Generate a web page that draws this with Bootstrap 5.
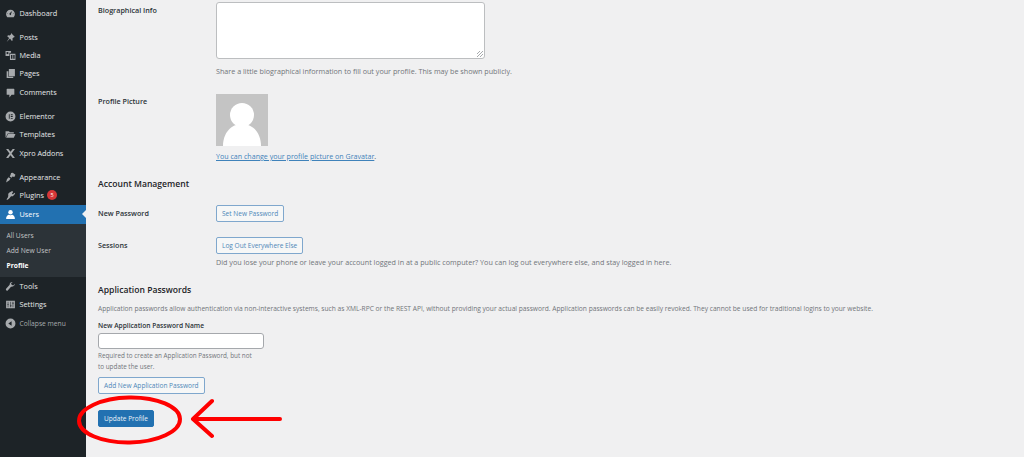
<!DOCTYPE html>
<html lang="en"><head><meta charset="utf-8"><title>Profile</title>
<link href="https://cdn.jsdelivr.net/npm/bootstrap@5.3.0/dist/css/bootstrap.min.css" rel="stylesheet">
<style>
html,body{height:457px;overflow:hidden}
body{background:#f0f0f1;font-family:"Open Sans","Noto Sans",sans-serif;font-size:7.2px;line-height:11px;color:#3c434a;position:relative}
.wp-side{width:86px;height:457px;background:#1d2327;color:#f0f0f1;padding-top:4px;flex:none}
.wp-item{height:18.4px;padding-left:4.5px;gap:4px;color:#e6e8e9;font-size:7.3px;position:relative}
.wp-item svg{width:11px;height:11px;fill:#a7aaad;flex:none}
.wp-gap{height:5.6px}
.wp-gap-thin{height:.5px}
.wp-active{background:#2271b1;color:#fff;height:19px}
.wp-active svg{fill:#fff}
.wp-active::after{content:"";position:absolute;right:0;top:5px;border:4.5px solid transparent;border-right-color:#f0f0f1;border-left:0}
.wp-count{width:10px;height:10px;border-radius:50%;background:#d63638;color:#fff;font-size:5.5px;line-height:10px;text-align:center;margin-left:-1px}
.wp-sub{background:#2c3338;height:53px;padding:4px 0 0 6.5px;color:#c3c4c7;font-size:6.7px}
.wp-sub div{height:15px;line-height:15px}
.wp-sub .wp-cur{color:#fff;font-weight:700}
.wp-muted{color:#a7aaad;font-size:6.7px}
.wp-main{flex:1;padding:0 0 0 12px;min-width:0}
.wp-label{width:118px;flex:none;font-weight:600;color:#2c3338;font-size:7.2px}
.wp-area{width:269px;height:57px;background:#fff;border:1px solid #bcbec0;border-radius:3px;position:relative}
.wp-area::after{content:"";position:absolute;right:1px;bottom:1px;width:6px;height:6px;background:repeating-linear-gradient(135deg,transparent 0 1.5px,#a7aaad 1.5px 2.3px)}
.wp-desc{color:#70757a}
.wp-tight{font-size:6.65px}
.wp-note{font-size:6.35px;margin-top:1px}
.wp-h{font-size:8.6px;line-height:12px;font-weight:600;color:#1d2327;margin:16px 0 0}
.wp-btn{font-size:6.55px;line-height:10px;padding:3px 5px;height:17px;border:1px solid #7fa7cd;border-radius:2px;background:#f6f7f7;color:#4f87b8;white-space:nowrap}
.wp-primary{background:#2271b1;border-color:#2271b1;color:#eaf2f8;margin-top:16px}
.wp-input{width:166px;height:16px;background:#fff;border:1px solid #a5a8ac;border-radius:3px;margin-top:2px}
.wp-link{color:#3f82ba;text-decoration:underline}
.wp-namelabel{margin-top:6px;font-weight:600;color:#2c3338}
.wp-mark{position:absolute;left:0;top:0;width:1024px;height:457px;pointer-events:none}
</style></head>
<body>
<div class="d-flex">
<nav class="wp-side">
<div class="wp-item d-flex align-items-center"><svg viewBox="0 0 20 20"><path d="M10 3a8 8 0 0 0-8 8c0 2.200.9 4.200 2.300 5.600h11.400A8 8 0 0 0 18 11a8 8 0 0 0-8-8zm0 10a2 2 0 0 1-1-3.700l4-4-2 5.200A2 2 0 0 1 10 13zM5 11H4v-1h1zm11 0h-1v-1h1z"/></svg>Dashboard</div>
<div class="wp-gap"></div>
<div class="wp-item d-flex align-items-center"><svg viewBox="0 0 20 20"><path d="M11 2l7 7-2 .5-2.500 2.500.5 3-1.500 1.500L9 12l-6 6 4.500-7L4 7.500 5.500 6l3 .5L11 4z"/></svg>Posts</div>
<div class="wp-item d-flex align-items-center"><svg viewBox="0 0 20 20"><path d="M1 2h10v3H8v6H1zm3.500 1.500a2 2 0 1 0 0 4 2 2 0 0 0 0-4zM9 7h10v11H9zm2 2v7h2.500V9zm4 0v7h2.500V9z"/></svg>Media</div>
<div class="wp-item d-flex align-items-center"><svg viewBox="0 0 20 20"><path d="M7 2h11v13H7zM3 6h3v10h9v2H3z"/></svg>Pages</div>
<div class="wp-item d-flex align-items-center"><svg viewBox="0 0 20 20"><path d="M4 3h12a1 1 0 0 1 1 1v9a1 1 0 0 1-1 1h-4l-4 5v-5H4a1 1 0 0 1-1-1V4a1 1 0 0 1 1-1z"/></svg>Comments</div>
<div class="wp-gap"></div>
<div class="wp-item d-flex align-items-center"><svg viewBox="0 0 20 20"><path fill-rule="evenodd" d="M10 1a9 9 0 1 0 0 18 9 9 0 0 0 0-18zM7 6h1.500v8H7zm3.500 0H14v1.500h-3.500zm0 3.200H14v1.500h-3.500zm0 3.300H14V14h-3.500z"/></svg>Elementor</div>
<div class="wp-item d-flex align-items-center"><svg viewBox="0 0 20 20"><path d="M1 4h6l2 2h7v2H5l-4 8zm4.500 5H19l-3 7H2z"/></svg>Templates</div>
<div class="wp-item d-flex align-items-center"><svg viewBox="0 0 20 20"><path d="M2 2h4l4 5 4-5h4l-6 8 6 8h-4l-4-5-4 5H2l6-8z"/></svg>Xpro Addons</div>
<div class="wp-gap"></div>
<div class="wp-item d-flex align-items-center"><svg viewBox="0 0 20 20"><path d="M11 2l3-.5 5 3.500-2 4-3.500-1-1.500 2.500-3.500-2.500 1.500-2.500zM6.500 9.500l3.500 2.500-2 3-6 4 1.500-6z"/></svg>Appearance</div>
<div class="wp-item d-flex align-items-center"><svg viewBox="0 0 20 20"><path d="M13 2l2 1.500-2.500 3 2 1.500L17 5l1.500 2-3 3c-1 1.500-3 2-4.500 1.200L8 15c-1 1.500-3 2.500-5 3 .2-2 1.200-4 2.500-5L6 9.500c-.5-1.500 0-3.500 1.500-4.500z"/></svg>Plugins<span class="wp-count">5</span></div>
<div class="wp-item wp-active d-flex align-items-center"><svg viewBox="0 0 20 20"><circle cx="10" cy="6" r="4"/><path d="M2 18c0-5 3-7 5-7.500 2 1.200 4 1.200 6 0 2 .5 5 2.500 5 7.500z"/></svg>Users</div>
<div class="wp-sub"><div>All Users</div><div>Add New User</div><div class="wp-cur">Profile</div></div>
<div class="wp-gap-thin"></div>
<div class="wp-item d-flex align-items-center"><svg viewBox="0 0 20 20"><path d="M18 5l-3 3-3-1-1-3 3-2c-3-.5-6 1.500-5.500 5L2 14c-1 1 0 4 2.500 3.500l6.500-7c3 .5 7-2 7-5.500z"/></svg>Tools</div>
<div class="wp-item d-flex align-items-center"><svg viewBox="0 0 20 20"><path fill-rule="evenodd" d="M2 3h16v14H2zm3 2v4H4v1h1v5h1v-5h1V9H6V5zm5 0v7H9v1h1v2h1v-2h1v-1h-1V5zm4 0v2h-1v1h1v7h1V8h1V7h-1V5z"/></svg>Settings</div>
<div class="wp-item d-flex align-items-center wp-muted"><svg viewBox="0 0 20 20"><path fill-rule="evenodd" d="M10 1a9 9 0 1 0 0 18 9 9 0 0 0 0-18zm2 5v8l-6-4z"/></svg>Collapse menu</div>
</nav>
<main class="wp-main">
<div class="d-flex" style="padding-top:2px">
<div class="wp-label" style="padding-top:3px">Biographical Info</div>
<div>
<div class="wp-area"></div>
<div class="wp-desc" style="margin-top:7px">Share a little biographical information to fill out your profile. This may be shown publicly.</div>
</div></div>
<div class="d-flex" style="margin-top:17px">
<div class="wp-label" style="padding-top:2px">Profile Picture</div>
<div>
<svg width="52" height="52" viewBox="0 0 52 52" class="d-block"><rect width="52" height="52" fill="#c4c4c4"/><circle cx="26" cy="21" r="12" fill="#fff"/><path d="M7 52c0-13 8-22 19-22s19 9 19 22z" fill="#fff"/></svg>
<div style="margin-top:5px;font-size:7.1px"><a class="wp-link" href="#">You can change your profile picture on Gravatar</a>.</div>
</div></div>
<h2 class="wp-h">Account Management</h2>
<div class="d-flex align-items-center" style="margin-top:15px">
<div class="wp-label">New Password</div><button class="wp-btn">Set New Password</button></div>
<div class="d-flex" style="margin-top:15px">
<div class="wp-label" style="padding-top:3px">Sessions</div>
<div><button class="wp-btn d-block">Log Out Everywhere Else</button>
<div class="wp-desc" style="margin-top:3px">Did you lose your phone or leave your account logged in at a public computer? You can log out everywhere else, and stay logged in here.</div></div></div>
<h2 class="wp-h">Application Passwords</h2>
<p class="wp-desc wp-tight" style="margin:7px 0 0">Application passwords allow authentication via non-interactive systems, such as XML-RPC or the REST API, without providing your actual password. Application passwords can be easily revoked. They cannot be used for traditional logins to your website.</p>
<div class="wp-tight wp-namelabel">New Application Password Name</div>
<div class="wp-input"></div>
<div class="wp-desc wp-note">Required to create an Application Password, but not<br>to update the user.</div>
<button class="wp-btn d-block" style="margin-top:5px">Add New Application Password</button>
<button class="wp-btn wp-primary d-block">Update Profile</button>
</main></div>
<svg class="wp-mark" viewBox="0 0 1024 457" fill="none" stroke="#f00" stroke-linecap="round" stroke-linejoin="round">
<ellipse cx="129.500" cy="420" rx="50.500" ry="22.500" stroke-width="4" transform="rotate(-1 129 420)"/>
<path d="M280 419H194M212 401l-19 18 19 17" stroke-width="4"/>
</svg>
</body></html>
